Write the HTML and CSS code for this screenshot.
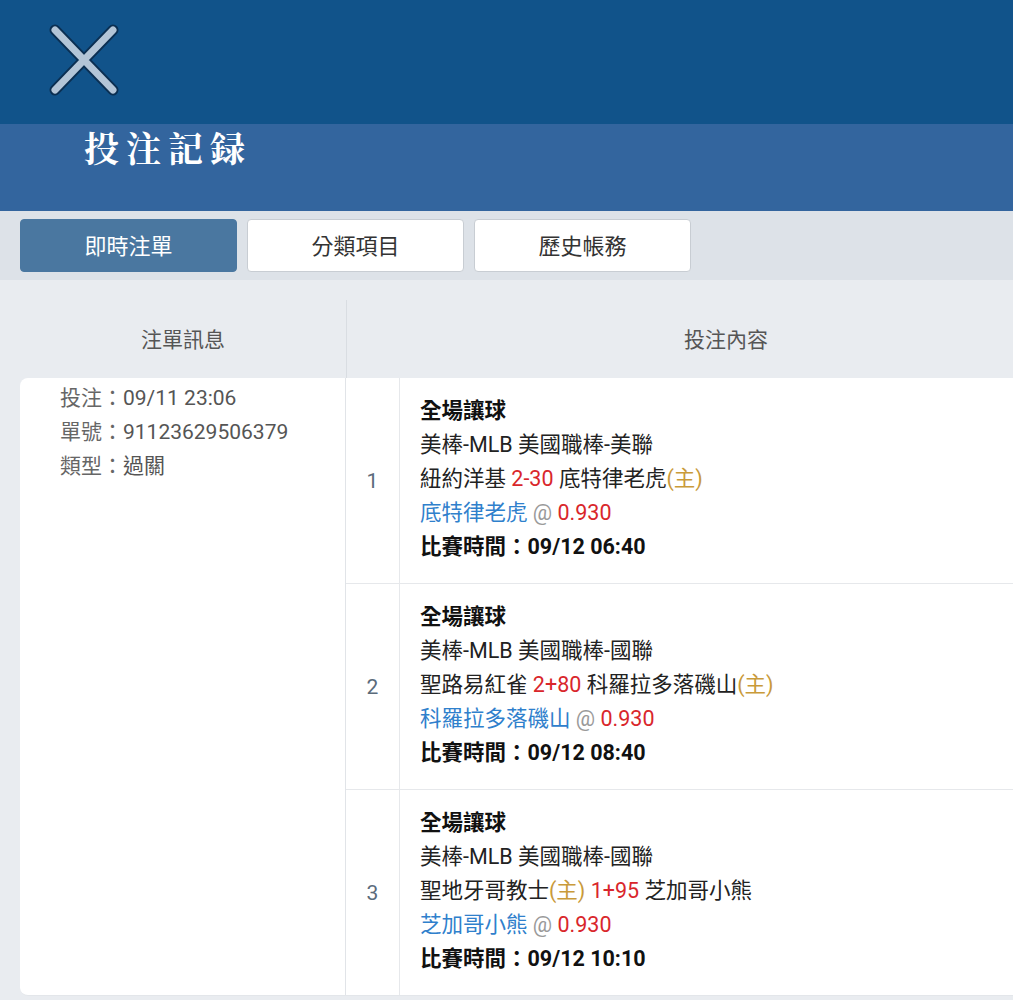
FILE: index.html
```html
<!DOCTYPE html>
<html lang="zh-Hant">
<head>
  <meta charset="UTF-8" />
  <meta name="viewport" content="width=device-width, initial-scale=1.0"/>
  <title>投注記録</title>
  <link rel="stylesheet" href="styles.css">
</head>
<body>
  <div id="topbar">
    <span id="close">
      <svg width="80" height="80" viewBox="0 0 80 80">
        <path d="M10 10 L68 70 M68 10 L10 70" stroke="#0b2f52" stroke-width="11" stroke-linecap="round" fill="none"/>
        <path d="M10 10 L68 70 M68 10 L10 70" stroke="#b3c5d7" stroke-width="7" stroke-linecap="round" fill="none"/>
      </svg>
    </span>
  </div>

  <div id="titlebar">
    <h1>投注記録</h1>
  </div>

  <div id="tabs">
    <span class="tab active">即時注單</span>
    <span class="tab">分類項目</span>
    <span class="tab">歷史帳務</span>
  </div>

  <div id="records">
    <div class="table">
      <div class="thead">
        <div class="th th-info">注單訊息</div>
        <div class="th th-content">投注內容</div>
      </div>

      <div class="tbody">
        <div class="info-cell">
          <div class="info-row"><span class="label">投注：</span>09/11 23:06</div>
          <div class="info-row"><span class="label">單號：</span>91123629506379</div>
          <div class="info-row"><span class="label">類型：</span>過關</div>
        </div>

        <div class="legs">
          <div class="leg">
            <div class="num">1</div>
            <div class="detail">
              <div class="bold">全場讓球</div>
              <div>美棒-MLB 美國職棒-美聯</div>
              <div>紐約洋基 <span class="red">2-30</span> 底特律老虎<span class="gold">(主)</span></div>
              <div><span class="blue">底特律老虎</span> <span class="grey">@</span> <span class="red">0.930</span></div>
              <div class="bold">比賽時間：09/12 06:40</div>
            </div>
          </div>

          <div class="leg">
            <div class="num">2</div>
            <div class="detail">
              <div class="bold">全場讓球</div>
              <div>美棒-MLB 美國職棒-國聯</div>
              <div>聖路易紅雀 <span class="red">2+80</span> 科羅拉多落磯山<span class="gold">(主)</span></div>
              <div><span class="blue">科羅拉多落磯山</span> <span class="grey">@</span> <span class="red">0.930</span></div>
              <div class="bold">比賽時間：09/12 08:40</div>
            </div>
          </div>

          <div class="leg">
            <div class="num">3</div>
            <div class="detail">
              <div class="bold">全場讓球</div>
              <div>美棒-MLB 美國職棒-國聯</div>
              <div>聖地牙哥教士<span class="gold">(主)</span> <span class="red">1+95</span> 芝加哥小熊</div>
              <div><span class="blue">芝加哥小熊</span> <span class="grey">@</span> <span class="red">0.930</span></div>
              <div class="bold">比賽時間：09/12 10:10</div>
            </div>
          </div>
        </div>
      </div>
    </div>
  </div>
</body>
</html>
```

FILE: styles.css
```css
html, body {
  margin: 0;
  padding: 0;
}

body {
  font-family: 'Roboto', 'Noto Sans CJK TC', sans-serif;
  background-color: #e9ecf0;
  color: #222;
  overflow-x: hidden;
}

#topbar {
  height: 124px;
  background-color: #11538a;
  padding: 20px 0 0 45px;
  box-sizing: border-box;
}

#close {
  display: inline-block;
  width: 80px;
  height: 80px;
}

#titlebar {
  height: 87px;
  background-color: #33659e;
  padding: 5px 0 0 84px;
  box-sizing: border-box;
}

#titlebar h1 {
  margin: 0;
  font-family: 'Noto Serif CJK TC', 'Noto Sans CJK TC', serif;
  font-size: 35px;
  line-height: 36px;
  font-weight: bold;
  letter-spacing: 7px;
  color: #fff;
}

#tabs {
  display: flex;
  gap: 10px;
  padding: 8px 20px;
  background-color: #dde2e8;
}

.tab {
  width: 217px;
  height: 53px;
  box-sizing: border-box;
  display: flex;
  align-items: center;
  justify-content: center;
  padding-bottom: 3px;
  font-size: 22px;
  color: #333;
  background-color: #fff;
  border: 1px solid #c8cdd3;
  border-radius: 4px;
}

.tab.active {
  background-color: #4a77a0;
  border-color: #4a77a0;
  color: #fff;
}

#records {
  padding: 20px 0 0 20px;
  overflow: hidden;
}

.table {
  width: 1085px;
}

.thead {
  display: flex;
  height: 78px;
}

.th {
  display: flex;
  align-items: center;
  justify-content: center;
  padding-bottom: 3px;
  font-size: 21px;
  color: #555;
}

.th-info {
  width: 326px;
  border-right: 1px solid #d9dde2;
}

.th-content {
  flex: 1;
}

.tbody {
  display: flex;
  background-color: #fff;
  border-radius: 8px 0 0 8px;
  border-bottom: 1px solid #e3e6ea;
}

.info-cell {
  width: 326px;
  padding: 3px 0 0 40px;
  box-sizing: border-box;
  border-right: 1px solid #e1e4e8;
  font-size: 21px;
  line-height: 34px;
  color: #555;
}

.info-row .label {
  color: #666;
}

.legs {
  flex: 1;
}

.leg {
  display: flex;
  border-bottom: 1px solid #e6e8eb;
}

.leg:last-child {
  border-bottom: none;
}

.num {
  width: 53px;
  border-right: 1px solid #e6e8eb;
  display: flex;
  align-items: center;
  justify-content: center;
  font-size: 21px;
  color: #5b6b7b;
}

.detail {
  padding: 16px 0 19px 20px;
  font-size: 21.5px;
  line-height: 34px;
}

.bold {
  font-weight: bold;
  color: #111;
}

.red {
  color: #d9262b;
}

.blue {
  color: #2f80cc;
}

.gold {
  color: #c99a3a;
}

.grey {
  color: #9a9a9a;
}
```
